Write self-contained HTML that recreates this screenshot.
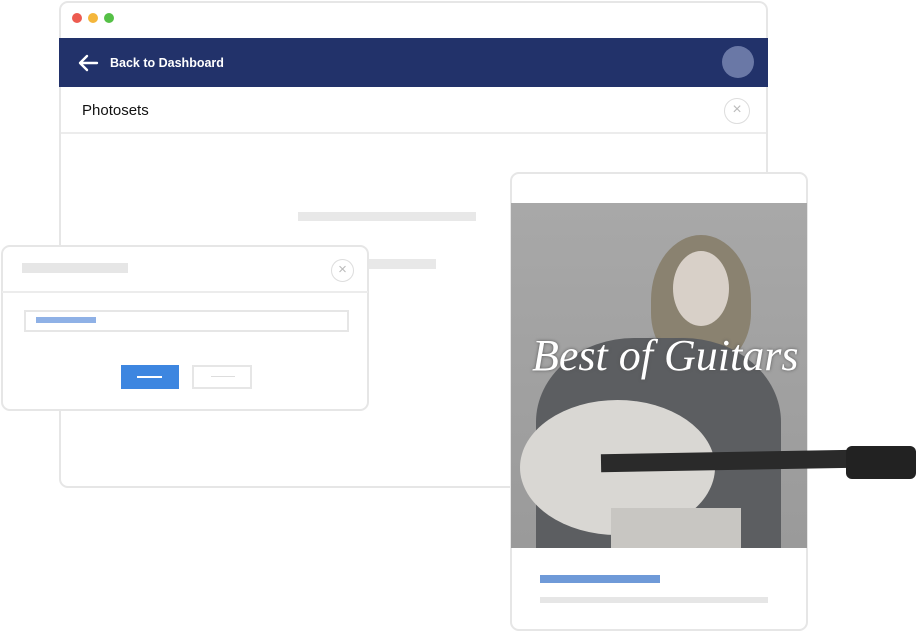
<!DOCTYPE html>
<html><head><style>
*{margin:0;padding:0;box-sizing:border-box}
body{width:918px;height:632px;background:#fff;position:relative;overflow:hidden;font-family:"Liberation Sans",sans-serif}
.a{position:absolute}
</style></head><body>
<div class="a" style="left:59px;top:1px;width:709px;height:487px;border:2px solid #e6e6e6;border-radius:9px;background:#fff"></div>
<div class="a" style="left:72px;top:13px;width:10px;height:10px;border-radius:50%;background:#ed5b50"></div>
<div class="a" style="left:88px;top:13px;width:10px;height:10px;border-radius:50%;background:#f4b63b"></div>
<div class="a" style="left:104px;top:13px;width:10px;height:10px;border-radius:50%;background:#55c046"></div>
<div class="a" style="left:59px;top:38px;width:709px;height:49px;background:#22326a"></div>
<svg class="a" style="left:77px;top:53px" width="22" height="20" viewBox="0 0 22 20"><path d="M20 10H3M10 3L3 10L10 17" stroke="#fff" stroke-width="2.4" fill="none" stroke-linecap="round" stroke-linejoin="round"/></svg>
<div class="a" style="left:110px;top:56px;color:#fff;font-size:12.5px;font-weight:bold">Back to Dashboard</div>
<div class="a" style="left:722px;top:46px;width:32px;height:32px;border-radius:50%;background:#6a78a6"></div>
<div class="a" style="left:82px;top:102px;font-size:15px;color:#111">Photosets</div>
<div class="a" style="left:61px;top:132px;width:705px;height:2px;background:#ececec"></div>
<div class="a" style="left:724px;top:98px;width:26px;height:26px;border-radius:50%;border:1.5px solid #ddd;color:#bbb;font-size:16px;text-align:center;line-height:22px">×</div>
<div class="a" style="left:298px;top:212px;width:178px;height:9px;background:#e8e8e8"></div>
<div class="a" style="left:368px;top:259px;width:68px;height:10px;background:#e8e8e8"></div>

<div class="a" style="left:1px;top:245px;width:368px;height:166px;border:2px solid #e6e6e6;border-radius:9px;background:#fff"></div>
<div class="a" style="left:22px;top:263px;width:106px;height:10px;background:#e6e6e6"></div>
<div class="a" style="left:331px;top:259px;width:23px;height:23px;border-radius:50%;border:1.5px solid #ddd;color:#bbb;font-size:15px;text-align:center;line-height:19px">×</div>
<div class="a" style="left:2px;top:291px;width:366px;height:2px;background:#ececec"></div>
<div class="a" style="left:24px;top:310px;width:325px;height:22px;border:2px solid #e6e6e6"></div>
<div class="a" style="left:36px;top:317px;width:60px;height:6px;background:#8fb1e6"></div>
<div class="a" style="left:121px;top:365px;width:58px;height:24px;background:#3d86e0"></div>
<div class="a" style="left:137px;top:376px;width:25px;height:2px;background:#fff"></div>
<div class="a" style="left:192px;top:365px;width:60px;height:24px;border:2px solid #e6e6e6"></div>
<div class="a" style="left:211px;top:376px;width:24px;height:1px;background:#ddd"></div>

<div class="a" style="left:510px;top:172px;width:298px;height:459px;border:2px solid #e6e6e6;border-radius:9px;background:#fff"></div>
<div class="a" style="left:511px;top:203px;width:296px;height:345px;background:linear-gradient(#a8a8a8,#9a9a9a);overflow:visible">
 <div class="a" style="left:140px;top:32px;width:100px;height:130px;border-radius:50% 50% 40% 40%;background:#8a8270"></div>
 <div class="a" style="left:162px;top:48px;width:56px;height:75px;border-radius:50%;background:#d8d0c8"></div>
 <div class="a" style="left:25px;top:135px;width:245px;height:210px;border-radius:40% 40% 0 0;background:#5c5e61"></div>
 <div class="a" style="left:9px;top:197px;width:195px;height:135px;border-radius:50%;background:#d9d7d3"></div>
 <div class="a" style="left:90px;top:249px;width:255px;height:18px;background:#2a2a2a;transform:rotate(-1deg)"></div>
 <div class="a" style="left:335px;top:243px;width:70px;height:33px;border-radius:6px;background:#222"></div>
 <div class="a" style="left:100px;top:305px;width:130px;height:40px;background:#c8c6c2"></div>
</div>
<div class="a" style="left:532px;top:330px;width:270px;color:#fff;font-family:'Liberation Serif',serif;font-style:italic;font-size:44px;text-shadow:0 0 3px #555;white-space:nowrap">Best of Guitars</div>
<div class="a" style="left:540px;top:575px;width:120px;height:8px;background:#6f9ad8"></div>
<div class="a" style="left:540px;top:597px;width:228px;height:6px;background:#e6e6e6"></div>
</body></html>
